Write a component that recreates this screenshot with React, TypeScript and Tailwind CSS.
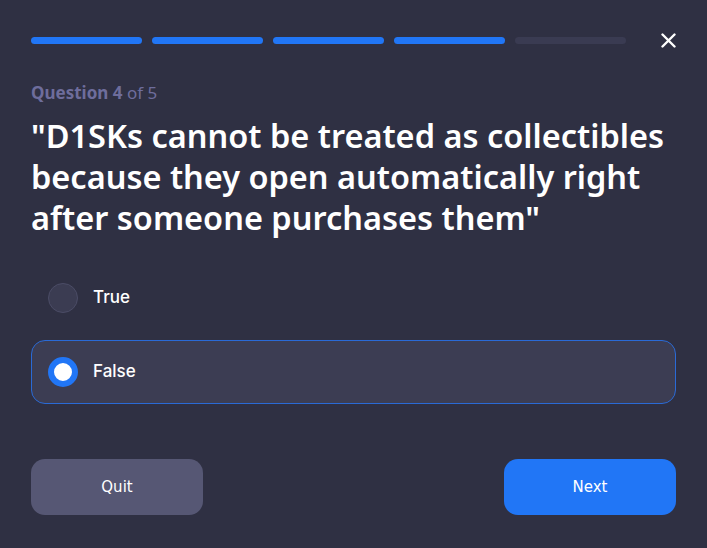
const steps = [true, true, true, true, false];

const options = [
  { label: "True", selected: false },
  { label: "False", selected: true },
];

export default function App() {
  return (
    <div className="h-[548px] w-[707px] bg-[#2f3043] px-[31px] pt-[30px] font-['Noto_Sans',sans-serif] text-white">
      <div className="flex items-center">
        <div className="flex flex-1 gap-[10px]">
          {steps.map((done, i) => (
            <div
              key={i}
              className={
                done
                  ? "h-[7px] w-[111px] rounded-full bg-[#2176f6]"
                  : "h-[7px] w-[111px] rounded-full bg-[#3a3b52]"
              }
            />
          ))}
        </div>
        <button className="mr-[-2px] flex h-[20px] w-[20px] items-center justify-center">
          <svg width="15" height="15" viewBox="0 0 15 15" fill="none">
            <path d="M1.5 1.5l12 12M13.5 1.5l-12 12" stroke="white" strokeWidth="2.4" strokeLinecap="round" />
          </svg>
        </button>
      </div>

      <p className="mt-[32px] text-[17px] leading-[22px] text-[#6e6d9c]">
        <span className="font-bold">Question 4</span> of 5
      </p>

      <h1 className="mt-[11px] text-[32.5px] font-semibold leading-[41px]">
        "D1SKs cannot be treated as collectibles because they open automatically right after someone purchases them"
      </h1>

      <div className="mt-[28px] flex flex-col gap-[10px] font-['Inter',sans-serif]">
        {options.map((o) => (
          <div
            key={o.label}
            className={
              o.selected
                ? "flex h-[64px] items-center gap-[15px] rounded-[14px] border border-[#2a6ad6] bg-[#3c3d53] px-[16px]"
                : "flex h-[64px] items-center gap-[15px] rounded-[14px] border border-transparent px-[16px]"
            }
          >
            {o.selected ? (
              <span className="h-[30px] w-[30px] rounded-full border-[6px] border-[#2176f6] bg-white" />
            ) : (
              <span className="h-[30px] w-[30px] rounded-full border border-[#4b4c66] bg-[#3b3c52]" />
            )}
            <span className="text-[17px] font-medium">{o.label}</span>
          </div>
        ))}
      </div>

      <div className="mt-[55px] flex justify-between font-['DejaVu_Sans',sans-serif] text-[15px]">
        <button className="h-[56px] w-[172px] rounded-[14px] bg-[#565774] text-white">Quit</button>
        <button className="h-[56px] w-[172px] rounded-[14px] bg-[#2176f6] text-white">Next</button>
      </div>
    </div>
  );
}
